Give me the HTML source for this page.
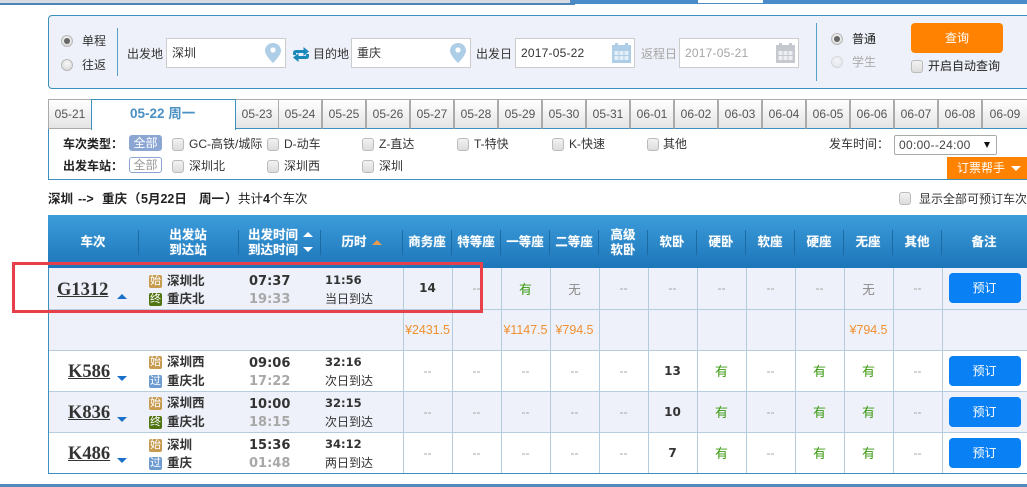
<!DOCTYPE html>
<html lang="zh"><head><meta charset="utf-8"><style>
*{box-sizing:border-box}
html,body{margin:0;padding:0}
body{width:1027px;height:487px;position:relative;overflow:hidden;background:#fff;font:12px "Liberation Sans","Noto Sans CJK SC",sans-serif;color:#333}
.a{position:absolute;white-space:nowrap}
.t{position:absolute;white-space:nowrap;line-height:16px;height:16px}
.rd{position:absolute;width:12px;height:12px;border-radius:50%;border:1px solid #b9b9b9;background:radial-gradient(circle at 50% 35%,#f8f8f8,#d5d5d5)}
.rd.on:after{content:"";position:absolute;left:2px;top:2px;width:6px;height:6px;border-radius:50%;background:#666}
.rd.off{opacity:.45}
.cb{position:absolute;width:12px;height:13px;border-radius:3px;border:1px solid #bbb;background:linear-gradient(#f2f2f2,#dcdcdc)}
.inp{position:absolute;top:38px;width:120px;height:30px;background:#fff;border:1px solid #ccc;line-height:28px;padding-left:5px;font-size:12px}
.tab{position:absolute;top:99px;height:30px;width:44px;border:1px solid #aaa;border-left:1px solid #aaa;border-bottom:1px solid #3d8fbd;background:linear-gradient(#fff,#e4e4e4);text-align:center;line-height:29px;color:#555;font-size:12px}
.th{color:#fff;font-weight:bold;font-size:12.5px;line-height:15px;text-align:center;transform:translateX(-50%);position:absolute;white-space:nowrap;text-shadow:0 0 1px rgba(255,255,255,.5)}
.sp{position:absolute;top:230px;width:1px;height:25px;background:#1c6ba3}
.tb{position:absolute;left:48px;top:268px;width:979px;border-collapse:collapse;table-layout:fixed;z-index:1}
.tb td{height:41px;padding:0;border:1px solid #b5ccdc;border-top:0;text-align:center;font-size:12px;color:#a0a0a0;vertical-align:middle}
.tb td.l{border-left:0}
.tb tr.g{background:#eef1f9}
.tb tr:last-child td{border-bottom:1px solid #3d8fbd}
.tb td.w{color:#888;font-size:12.5px}
.tb td.y{color:#3a9a10;font-size:13px}
.tb td.n{color:#333;font-weight:bold;font-family:"DejaVu Sans","Liberation Sans",sans-serif;font-size:12px}
.tb td.p{color:#f09030;font-size:12.5px;letter-spacing:-.05px}
.btn{display:block;width:72px;height:30px;background:#0a80f5;border-radius:4px;color:#fff;line-height:30px;margin:0 0 0 6px;font-size:12px}
.num{position:absolute;font:bold 18.5px "Liberation Serif",serif;text-decoration:underline;color:#333;z-index:2;line-height:22px;white-space:nowrap}
.bd{position:absolute;left:149px;width:13px;height:13px;border-radius:2px;color:#fff;font-size:11px;line-height:13px;text-align:center;z-index:2}
.s{background:#c89c50}.e{background:#4f7410}.m{background:#6d9bd0}
.st{position:absolute;left:167px;font-weight:bold;font-size:12.5px;line-height:16px;z-index:2;color:#333;white-space:nowrap}
.tm{position:absolute;left:249px;font:bold 13px "DejaVu Sans",sans-serif;line-height:16px;z-index:2;color:#333}
.tm.g2{color:#a8a8a8}
.du{position:absolute;left:325px;font:bold 11.5px "DejaVu Sans",sans-serif;line-height:16px;z-index:2;color:#333}
.ar{position:absolute;left:325px;font-size:12px;line-height:16px;z-index:2;color:#333}
.tri{position:absolute;left:117px;width:0;height:0;border-left:5px solid transparent;border-right:5px solid transparent;z-index:2}
.dn{border-top:5px solid #1a6fc8}
.up{border-bottom:5px solid #1a6fc8}
.r{font-weight:bold;font-size:12.5px;color:#222;top:191px}
</style></head><body>
<div class="a" style="left:0;top:0;width:575px;height:3px;background:#d8dde3"></div>
<div class="a" style="left:570px;top:0;width:457px;height:4px;background:#4a8bc8"></div>
<div class="a" style="left:0;top:3px;width:575px;height:2px;background:#4a84b8"></div>
<div class="a" style="left:698px;top:0;width:65px;height:3px;background:#fff"></div>

<div class="a" style="left:48px;top:15px;width:990px;height:74px;background:#eef1f9;border:1px solid #3d8fbd;border-radius:4px"></div>
<div class="rd on" style="left:61px;top:35px"></div><div class="rd" style="left:61px;top:59px"></div>
<div class="t" style="left:82px;top:33px">单程</div><div class="t" style="left:82px;top:57px">往返</div>
<div class="a" style="left:117px;top:28px;width:1px;height:48px;background:#5a9fc8"></div>
<div class="t" style="left:127px;top:46px">出发地</div>
<div class="inp" style="left:166px">深圳</div>
<svg class="a" style="left:265px;top:43px" width="16" height="20" viewBox="0 0 16 20"><path d="M8 0C3.600 0 0 3.400 0 7.600 0 12.500 8 20 8 20s8-7.500 8-12.400C16 3.400 12.400 0 8 0z" fill="#aecde6"/><circle cx="8" cy="7" r="2.600" fill="#fff"/></svg>
<svg class="a" style="left:293px;top:47px" width="16" height="15" viewBox="0 0 16 15"><path d="M1.500 8V6Q1.500 4.500 3 4.500H11M14.500 7V9Q14.500 10.500 13 10.500H5" fill="none" stroke="#1a88b8" stroke-width="3"/><path d="M10.500 0L16 4.500 10.500 9zM5.500 6L0 10.500 5.500 15z" fill="#1a88b8"/></svg>
<div class="t" style="left:313px;top:46px">目的地</div>
<div class="inp" style="left:351px">重庆</div>
<svg class="a" style="left:450px;top:43px" width="16" height="20" viewBox="0 0 16 20"><path d="M8 0C3.600 0 0 3.400 0 7.600 0 12.500 8 20 8 20s8-7.500 8-12.400C16 3.400 12.400 0 8 0z" fill="#aecde6"/><circle cx="8" cy="7" r="2.600" fill="#fff"/></svg>
<div class="t" style="left:476px;top:46px">出发日</div>
<div class="inp" style="left:515px;letter-spacing:.2px">2017-05-22</div>
<svg class="a" style="left:612px;top:43px" width="19" height="20" viewBox="0 0 19 20"><path d="M0 2h3V0h3v2h7V0h3v2h3v18H0z" fill="#aecde6"/><path d="M2.500 8h4v4h-4zM7.500 8h4v4h-4zM12.500 8h4v4h-4zM2.500 13h4v4h-4zM7.500 13h4v4h-4zM12.500 13h4v4h-4z" fill="#e4eef7"/></svg>
<div class="t" style="left:641px;top:46px;color:#a5a5a5">返程日</div>
<div class="inp" style="left:679px;color:#a5a5a5;letter-spacing:.2px">2017-05-21</div>
<svg class="a" style="left:776px;top:43px" width="19" height="20" viewBox="0 0 19 20"><path d="M0 2h3V0h3v2h7V0h3v2h3v18H0z" fill="#c6c8d0"/><path d="M2.500 8h4v4h-4zM7.500 8h4v4h-4zM12.500 8h4v4h-4zM2.500 13h4v4h-4zM7.500 13h4v4h-4zM12.500 13h4v4h-4z" fill="#eceef2"/></svg>
<div class="a" style="left:816px;top:23px;width:1px;height:58px;background:#5a9fc8"></div>
<div class="rd on" style="left:831px;top:33px"></div><div class="rd off" style="left:831px;top:56px"></div>
<div class="t" style="left:852px;top:31px;color:#222">普通</div><div class="t" style="left:852px;top:54px;color:#aaa">学生</div>
<div class="a" style="left:911px;top:23px;width:92px;height:30px;background:#ff8200;border-radius:4px;color:#fff;text-align:center;line-height:30px">查询</div>
<div class="cb" style="left:911px;top:60px"></div>
<div class="t" style="left:928px;top:58px;color:#222">开启自动查询</div>

<div class="a" style="left:48px;top:129px;width:979px;height:51px;background:#fff;border-left:1px solid #3d8fbd;border-bottom:1px solid #3d8fbd"></div>
<div class="tab" style="left:48px;border-bottom-color:#aaa">05-21</div>
<div class="a" style="left:91px;top:99px;width:145px;height:31px;background:#fff;border:1px solid #3d8fbd;border-bottom:0;z-index:1"></div>
<div class="t" style="left:130px;top:106px;font-weight:bold;font-size:13.500px;color:#4a90c4;z-index:2">05-22 周一</div>
<div class="tab" style="left:235px">05-23</div><div class="tab" style="left:278px">05-24</div><div class="tab" style="left:322px">05-25</div><div class="tab" style="left:366px">05-26</div><div class="tab" style="left:410px">05-27</div><div class="tab" style="left:454px">05-28</div><div class="tab" style="left:498px">05-29</div><div class="tab" style="left:542px">05-30</div><div class="tab" style="left:586px">05-31</div><div class="tab" style="left:630px">06-01</div><div class="tab" style="left:674px">06-02</div><div class="tab" style="left:718px">06-03</div><div class="tab" style="left:762px">06-04</div><div class="tab" style="left:806px">06-05</div><div class="tab" style="left:850px">06-06</div><div class="tab" style="left:894px">06-07</div><div class="tab" style="left:938px">06-08</div><div class="tab" style="left:982px;width:46px">06-09</div>

<div class="t" style="left:63px;top:136px;font-weight:bold;color:#222">车次类型：</div>
<div class="a" style="left:129px;top:135px;width:33px;height:16px;background:#8ca6d4;border-radius:3px;color:#fff;text-align:center;line-height:16px">全部</div>
<div class="cb" style="left:172px;top:138px"></div><div class="t" style="left:189px;top:136px">GC-高铁/城际</div>
<div class="cb" style="left:267px;top:138px"></div><div class="t" style="left:284px;top:136px">D-动车</div>
<div class="cb" style="left:362px;top:138px"></div><div class="t" style="left:379px;top:136px">Z-直达</div>
<div class="cb" style="left:457px;top:138px"></div><div class="t" style="left:474px;top:136px">T-特快</div>
<div class="cb" style="left:552px;top:138px"></div><div class="t" style="left:569px;top:136px">K-快速</div>
<div class="cb" style="left:647px;top:138px"></div><div class="t" style="left:663px;top:136px">其他</div>
<div class="t" style="left:829px;top:136px">发车时间：</div>
<div class="a" style="left:894px;top:135px;width:103px;height:20px;border:1px solid #aaa;border-radius:2px;line-height:19px;padding-left:4px;color:#444;letter-spacing:.3px">00:00--24:00<span class="a" style="left:89px;top:6px;border-left:3px solid transparent;border-right:3px solid transparent;border-top:6px solid #111"></span></div>
<div class="a" style="left:947px;top:157px;width:80px;height:22px;background:#ff8200;color:#fff;line-height:22px;padding-left:10px">订票帮手<span class="a" style="left:64px;top:9px;border-left:5px solid transparent;border-right:5px solid transparent;border-top:5px solid #fff"></span></div>
<div class="t" style="left:63px;top:158px;font-weight:bold;color:#222">出发车站：</div>
<div class="a" style="left:129px;top:157px;width:33px;height:16px;background:#fff;border:1px solid #8ca6d4;border-radius:3px;color:#999;text-align:center;line-height:14px">全部</div>
<div class="cb" style="left:172px;top:160px"></div><div class="t" style="left:189px;top:158px">深圳北</div>
<div class="cb" style="left:267px;top:160px"></div><div class="t" style="left:284px;top:158px">深圳西</div>
<div class="cb" style="left:362px;top:160px"></div><div class="t" style="left:379px;top:158px">深圳</div>

<div class="t r" style="left:48px">深圳</div><div class="t r" style="left:78px">--&gt;</div><div class="t r" style="left:102px">重庆</div><div class="t r" style="left:128px">（</div><div class="t r" style="left:141px">5月22日</div><div class="t r" style="left:199px">周一</div><div class="t r" style="left:225px">）</div>
<div class="t" style="left:238px;top:191px;font-size:12.500px;color:#222">共计<b>4</b>个车次</div>
<div class="cb" style="left:899px;top:192px"></div><div class="t" style="left:919px;top:191px">显示全部可预订车次</div>

<div class="a" style="left:48px;top:215px;width:979px;height:53px;background:linear-gradient(#3c9cda,#1d76ba)"></div>
<div class="sp" style="left:138px"></div><div class="sp" style="left:238px"></div><div class="sp" style="left:320px"></div><div class="sp" style="left:402px"></div><div class="sp" style="left:451px"></div><div class="sp" style="left:500px"></div><div class="sp" style="left:549px"></div><div class="sp" style="left:598px"></div><div class="sp" style="left:647px"></div><div class="sp" style="left:696px"></div><div class="sp" style="left:745px"></div><div class="sp" style="left:794px"></div><div class="sp" style="left:843px"></div><div class="sp" style="left:892px"></div><div class="sp" style="left:941px"></div>
<div class="th" style="left:93px;top:235px">车次</div>
<div class="th" style="left:188px;top:228px">出发站<br>到达站</div>
<div class="th" style="left:273px;top:228px">出发时间<br>到达时间</div>
<div class="a" style="left:303px;top:232px;border-left:5px solid transparent;border-right:5px solid transparent;border-bottom:5px solid #fff"></div>
<div class="a" style="left:303px;top:247px;border-left:5px solid transparent;border-right:5px solid transparent;border-top:5px solid #fff"></div>
<div class="th" style="left:354px;top:235px">历时</div>
<div class="a" style="left:372px;top:240px;border-left:5px solid transparent;border-right:5px solid transparent;border-bottom:5px solid #e89a50"></div>
<div class="th" style="left:427px;top:235px">商务座</div><div class="th" style="left:476px;top:235px">特等座</div><div class="th" style="left:525px;top:235px">一等座</div><div class="th" style="left:574px;top:235px">二等座</div>
<div class="th" style="left:623px;top:228px">高级<br>软卧</div>
<div class="th" style="left:672px;top:235px">软卧</div><div class="th" style="left:721px;top:235px">硬卧</div><div class="th" style="left:770px;top:235px">软座</div><div class="th" style="left:819px;top:235px">硬座</div><div class="th" style="left:868px;top:235px">无座</div><div class="th" style="left:917px;top:235px">其他</div><div class="th" style="left:984px;top:235px">备注</div>

<table class="tb"><colgroup><col style="width:355px"><col style="width:49px"><col style="width:49px"><col style="width:49px"><col style="width:49px"><col style="width:49px"><col style="width:49px"><col style="width:49px"><col style="width:49px"><col style="width:49px"><col style="width:49px"><col style="width:49px"><col style="width:85px"></colgroup>
<tr class="g"><td class="l"></td><td class="n">14</td><td>--</td><td class="y">有</td><td class="w">无</td><td>--</td><td>--</td><td>--</td><td>--</td><td>--</td><td class="w">无</td><td>--</td><td><span class="btn">预订</span></td></tr>
<tr class="g"><td class="l"></td><td class="p">¥2431.5</td><td></td><td class="p">¥1147.5</td><td class="p">¥794.5</td><td></td><td></td><td></td><td></td><td></td><td class="p">¥794.5</td><td></td><td></td></tr>
<tr><td class="l"></td><td>--</td><td>--</td><td>--</td><td>--</td><td>--</td><td class="n">13</td><td class="y">有</td><td>--</td><td class="y">有</td><td class="y">有</td><td>--</td><td><span class="btn">预订</span></td></tr>
<tr class="g"><td class="l"></td><td>--</td><td>--</td><td>--</td><td>--</td><td>--</td><td class="n">10</td><td class="y">有</td><td>--</td><td class="y">有</td><td class="y">有</td><td>--</td><td><span class="btn">预订</span></td></tr>
<tr><td class="l"></td><td>--</td><td>--</td><td>--</td><td>--</td><td>--</td><td class="n">7</td><td class="y">有</td><td>--</td><td class="y">有</td><td class="y">有</td><td>--</td><td><span class="btn">预订</span></td></tr>
</table>
<div class="a" style="left:48px;top:268px;width:1px;height:206px;background:#3d8fbd;z-index:2"></div>

<div class="num" style="left:57px;top:279px">G1312</div><div class="tri up" style="top:294px"></div>
<div class="bd s" style="top:275px">始</div><div class="st" style="top:273px">深圳北</div>
<div class="bd e" style="top:293px">终</div><div class="st" style="top:291px">重庆北</div>
<div class="tm" style="top:274px">07:37</div><div class="tm g2" style="top:292px">19:33</div>
<div class="du" style="top:272px">11:56</div><div class="ar" style="top:291px">当日到达</div>

<div class="num" style="left:68px;top:361px">K586</div><div class="tri dn" style="top:376px"></div>
<div class="bd s" style="top:356px">始</div><div class="st" style="top:354px">深圳西</div>
<div class="bd m" style="top:375px">过</div><div class="st" style="top:373px">重庆北</div>
<div class="tm" style="top:356px">09:06</div><div class="tm g2" style="top:374px">17:22</div>
<div class="du" style="top:354px">32:16</div><div class="ar" style="top:373px">次日到达</div>

<div class="num" style="left:68px;top:402px">K836</div><div class="tri dn" style="top:417px"></div>
<div class="bd s" style="top:397px">始</div><div class="st" style="top:395px">深圳西</div>
<div class="bd e" style="top:416px">终</div><div class="st" style="top:414px">重庆北</div>
<div class="tm" style="top:397px">10:00</div><div class="tm g2" style="top:415px">18:15</div>
<div class="du" style="top:395px">32:15</div><div class="ar" style="top:414px">次日到达</div>

<div class="num" style="left:68px;top:443px">K486</div><div class="tri dn" style="top:458px"></div>
<div class="bd s" style="top:439px">始</div><div class="st" style="top:437px">深圳</div>
<div class="bd m" style="top:457px">过</div><div class="st" style="top:455px">重庆</div>
<div class="tm" style="top:438px">15:36</div><div class="tm g2" style="top:456px">01:48</div>
<div class="du" style="top:436px">34:12</div><div class="ar" style="top:455px">两日到达</div>

<div class="a" style="left:12px;top:262px;width:471px;height:51px;border:3px solid #e8404a;z-index:3"></div>
<div class="a" style="left:0;top:484px;width:1027px;height:3px;background:#4f8abb"></div>
</body></html>
